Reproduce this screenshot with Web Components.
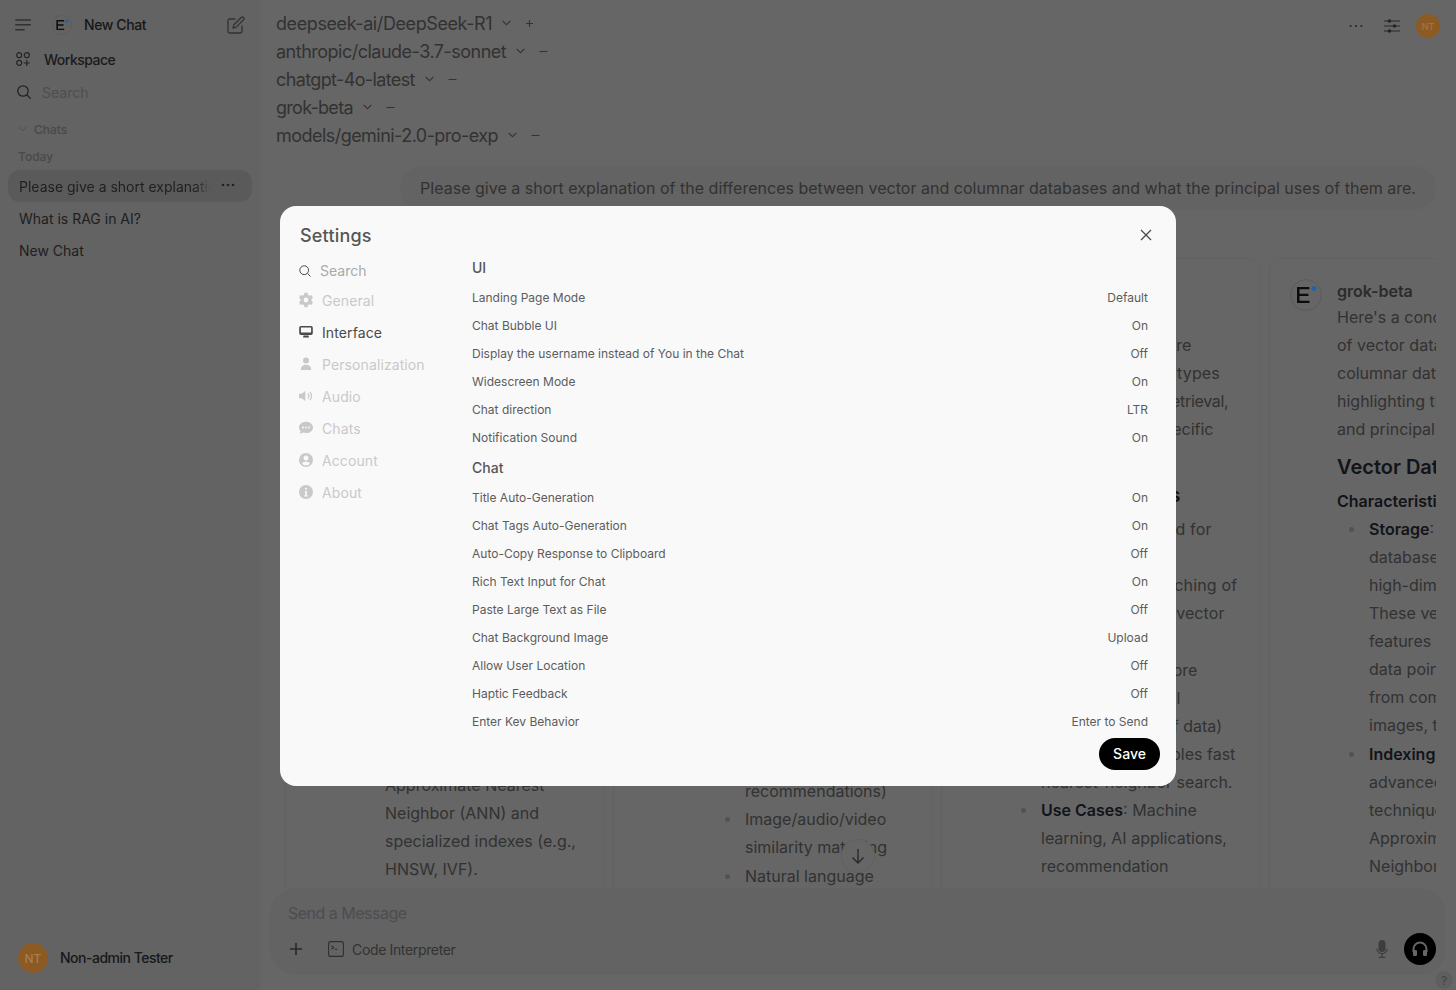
<!DOCTYPE html>
<html lang="en">
<head>
<meta charset="utf-8">
<title>Settings</title>
<style>
  html, body { margin: 0; height: 100%; overflow: hidden; background: #fff; }
  body { font-family: Inter, "Liberation Sans", sans-serif; }
</style>
</head>
<body>
<app-root></app-root>

<script>
const LOGO = (size) => `<svg class="logo" width="${size}" height="${size}" viewBox="0 0 32 32">
  <circle cx="16" cy="16" r="15.4" fill="none" stroke="#585858" stroke-width=".8"/>
  <path d="M7 8h12.300v2.200H9.500v4.600h9v2.200h-9v4.800h10V24H7z" fill="#0c0c0c"/>
  <circle cx="24" cy="9.500" r="2.400" fill="#1f64a6"/>
</svg>`;

class BaseElement extends HTMLElement {
  constructor(){
    super();
    this.attachShadow({ mode: 'open' });
    this.shadowRoot.innerHTML = this.constructor.markup;
  }
}

class SideItem extends BaseElement {
  static markup = /*html*/ `
    <style>
      :host{
        display: flex;
        align-items: center;
        height: 32px;
        margin: 0 8px;
        padding: 0 11px;
        border-radius: 12px;
        font-size: 14px;
        color: #505050;
      }
      :host([active]){ background: #e2e2e2; }
      .title{ flex: 1; white-space: nowrap; overflow: hidden; }
      :host([active]) .title{
        -webkit-mask-image: linear-gradient(to right, #000 176px, transparent 192px);
        mask-image: linear-gradient(to right, #000 176px, transparent 192px);
      }
      .more{ display: none; width: 16px; height: 16px; margin-right: 5px; color: #555; }
      :host([active]) .more{ display: block; }
    </style>
    <span class="title"><slot></slot></span>
    <svg class="more" viewBox="0 0 16 16" fill="currentColor"><circle cx="3" cy="7" r="1.300"/><circle cx="8" cy="7" r="1.300"/><circle cx="13" cy="7" r="1.300"/></svg>
  `;
}

class SideBar extends BaseElement {
  static markup = /*html*/ `
    <style>
      :host{
        display: flex;
        flex-direction: column;
        flex: none;
        width: 260px;
        height: 100%;
        background: #f7f7f7;
        font-size: 14px;
      }
      .top{ display: flex; align-items: center; height: 34px; margin-top: 8px; padding-left: 15px; }
      .top .logo{ margin-left: 21px; position: relative; z-index: 60; }
      .top .name{ margin: -2px 0 0 12px; font-weight: 500; letter-spacing: -.4px; color: #3e3e3e; flex: 1; }
      .top .pen{ margin-right: 15px; color: #7c7c7c; }
      .nav{ display: flex; align-items: center; height: 32px; padding-left: 16px; }
      .workspace{ margin-top: 1px; font-weight: 500; letter-spacing: -.5px; color: #484848; }
      .workspace span{ margin-left: 14px; }
      .search{ margin-top: 1px; color: #c4c4c4; padding-left: 17px; }
      .search span{ margin-left: 11px; }
      .chats{ display: flex; align-items: center; height: 24px; margin-top: 9px; padding-left: 18px; font-size: 12px; font-weight: 500; color: #b6b6b6; }
      .chats span{ margin-left: 7px; }
      .today{ height: 18px; line-height: 18px; margin: 7px 0 4px; padding-left: 18px; font-size: 12px; font-weight: 500; color: #b6b6b6; }
      .user{ display: flex; align-items: center; margin-top: auto; margin-bottom: 17px; padding-left: 18px; font-weight: 500; letter-spacing: -.5px; color: #3a3f4b; }
      .avatar{
        display: flex; align-items: center; justify-content: center;
        width: 30px; height: 30px; border-radius: 50%;
        background: #8c5a22; color: #a67e4e; font-size: 12px; letter-spacing: 0;
        position: relative; z-index: 60;
      }
      .user .label{ margin: -2px 0 0 12px; }
    </style>
    <div class="top">
      <svg width="16" height="12" viewBox="0 0 16 12" fill="none" stroke="#7c7c7c" stroke-width="1.500" stroke-linecap="round"><path d="M.8 1h14.600M.8 5.800h14.600M.8 10.800h8.400"/></svg>
      ${LOGO(20)}
      <span class="name">New Chat</span>
      <svg class="pen" width="18" height="18" viewBox="0 0 18 18" fill="none" stroke="currentColor" stroke-width="1.300" stroke-linejoin="round" stroke-linecap="round"><path d="M8 3H2.400A1.400 1.400 0 0 0 1 4.400v11.200A1.400 1.400 0 0 0 2.400 17h11.200a1.400 1.400 0 0 0 1.400-1.400V10"/><path d="M14.200 1.500a1.600 1.600 0 0 1 2.300 2.300L9.200 11.100l-3.200.9.9-3.200z"/></svg>
    </div>
    <div class="nav workspace">
      <svg width="14" height="14" viewBox="0 0 14 14" fill="none" stroke="#5a5a5a" stroke-width="1.200"><circle cx="3.200" cy="3.200" r="2.500"/><circle cx="10.800" cy="3.200" r="2.500"/><circle cx="3.200" cy="10.800" r="2.500"/><path d="M10.800 8v6M7.800 11h6"/></svg>
      <span>Workspace</span>
    </div>
    <div class="nav search">
      <svg width="14" height="14" viewBox="0 0 14 14" fill="none" stroke="#555" stroke-width="1.300" stroke-linecap="round"><circle cx="6" cy="6" r="5.200"/><path d="M10 10l3.400 3.400"/></svg>
      <span>Search</span>
    </div>
    <div class="chats">
      <svg width="9" height="6" viewBox="0 0 9 6" fill="none" stroke="#c4c4c4" stroke-width="1"><path d="M.5 .8l4 4 4-4"/></svg>
      <span>Chats</span>
    </div>
    <div class="today">Today</div>
    <side-item active>Please give a short explanation of the differences</side-item>
    <side-item>What is RAG in AI?</side-item>
    <side-item>New Chat</side-item>
    <div class="user">
      <div class="avatar">NT</div>
      <span class="label">Non-admin Tester</span>
    </div>
  `;
}

class ModelRow extends BaseElement {
  static markup = /*html*/ `
    <style>
      :host{ display: flex; align-items: center; height: 28px; font-size: 18px; letter-spacing: -.5px; color: #7e7e7e; white-space: nowrap; }
      svg{ flex: none; margin-left: 10px; color: #808080; }
      .sign{ margin-left: 14px; }
    </style>
    <slot></slot>
    <svg width="9" height="6" viewBox="0 0 9 6" fill="none" stroke="currentColor" stroke-width="1.200"><path d="M.6 .8l3.900 3.900L8.400 .8"/></svg>
    <svg class="sign" width="9" height="9" viewBox="0 0 9 9" fill="none" stroke="currentColor" stroke-width="1.100"></svg>
  `;
  connectedCallback(){
    const path = this.hasAttribute('add') ? 'M4.500 1v7M1 4.500h7' : 'M.5 4.500h8';
    this.shadowRoot.querySelector('.sign').innerHTML = `<path d="${path}"/>`;
  }
}

class ChatHeader extends BaseElement {
  static markup = /*html*/ `
    <style>
      :host{ display: flex; justify-content: space-between; align-items: flex-start; flex: none; padding: 9px 16px 0; }
      .actions{ display: flex; align-items: center; height: 24px; margin-top: 5px; }
      .avatar{
        display: flex; align-items: center; justify-content: center;
        width: 24px; height: 24px; margin-left: 16px; border-radius: 50%;
        background: #8c5a22; color: #a07546; font-size: 9px; font-weight: 500;
        position: relative; z-index: 60;
      }
      .sliders{ margin-left: 21px; }
    </style>
    <div>
      <model-row add style="letter-spacing:-.41px">deepseek-ai/DeepSeek-R1</model-row>
      <model-row>anthropic/claude-3.7-sonnet</model-row>
      <model-row style="letter-spacing:-.62px">chatgpt-4o-latest</model-row>
      <model-row style="letter-spacing:-.72px">grok-beta</model-row>
      <model-row style="letter-spacing:-.54px">models/gemini-2.0-pro-exp</model-row>
    </div>
    <div class="actions">
      <svg width="14" height="4" viewBox="0 0 14 4" fill="#5e5e5e"><circle cx="1.600" cy="2" r="1.100"/><circle cx="7" cy="2" r="1.100"/><circle cx="12.400" cy="2" r="1.100"/></svg>
      <svg class="sliders" width="16" height="14" viewBox="0 0 16 14" fill="#5e5e5e" stroke="#5e5e5e" stroke-width="1.200"><path d="M0 2h16M0 7h16M0 12h16" fill="none"/><circle cx="5.500" cy="2" r="1.200"/><circle cx="10.500" cy="7" r="1.200"/><circle cx="5.500" cy="12" r="1.200"/></svg>
      <div class="avatar">NT</div>
    </div>
  `;
}

class ChatLine extends BaseElement {
  static markup = /*html*/ `<style>
      :host{ display: block; height: 28px; line-height: 28px; font-size: 16px; color: #7d7d7d; white-space: nowrap; }
      :host([indent]){ padding-left: 32px; }
      :host([deep]){ padding-left: 64px; }
      :host([bullet])::before{
        content: '';
        display: inline-block;
        width: 5px;
        height: 5px;
        margin: 0 15px 2px -20px;
        border-radius: 50%;
        background: #ccc;
        vertical-align: middle;
      }
      :host([h2]){ font-size: 20px; font-weight: 600; color: #30343f; }
      :host([h3]){ height: 24px; line-height: 24px; font-size: 16px; font-weight: 600; color: #30343f; }
      :host([name]){ height: 24px; line-height: 24px; font-weight: 600; color: #6e6e6e; }
      ::slotted(b){ font-weight: 600; color: #30343f; }
    </style><slot></slot>`;
}

class ChatColumn extends BaseElement {
  static markup = /*html*/ `
    <style>
      :host{
        display: flex;
        flex: none;
        box-sizing: border-box;
        width: 320px;
        min-height: 700px;
        padding: 20px 20px 0;
        border: 1px dotted #e6e6e6;
        border-radius: 12px;
      }
      .badge{ flex: none; width: 32px; height: 32px; margin-right: 15px; }
      .badge svg{ display: block; position: relative; z-index: 60; }
      .body{ flex: 1; min-width: 0; }
    </style>
    <div class="badge"></div>
    <div class="body"><slot></slot></div>
  `;
  connectedCallback(){
    if(this.hasAttribute('logo')) this.shadowRoot.querySelector('.badge').innerHTML = LOGO(32);
  }
}

class MessageInput extends BaseElement {
  static markup = /*html*/ `
    <style>
      :host{
        display: block;
        flex: none;
        height: 87px;
        box-sizing: border-box;
        margin: 0 10px 15px;
        padding: 13px 10px 0 19px;
        border-radius: 26px;
        background: #f7f7f7;
      }
      .placeholder{ height: 24px; line-height: 24px; margin-left: -1px; font-size: 16px; letter-spacing: -.5px; color: #bcc1cb; }
      .tools{ display: flex; align-items: center; margin-top: 8px; height: 32px; }
      .code{ margin-left: 25px; display: flex; align-items: center; font-size: 14px; letter-spacing: -.35px; color: #808080; }
      .code span{ margin-left: 8px; }
      .plus{ color: #666; }
      .mic{ margin-left: auto; color: #9a9a9a; }
      .voice{
        display: flex; align-items: center; justify-content: center;
        width: 32px; height: 32px; margin-left: 16px;
        border-radius: 50%; background: #000; color: #fff;
      }
    </style>
    <div class="placeholder">Send a Message</div>
    <div class="tools">
      <svg class="plus" width="14" height="14" viewBox="0 0 14 14" fill="none" stroke="currentColor" stroke-width="1.600"><path d="M7 1v12M1 7h12"/></svg>
      <div class="code">
        <svg width="16" height="16" viewBox="0 0 16 16" fill="none" stroke="#747474" stroke-width="1.100"><rect x=".6" y=".6" width="14.800" height="14.800" rx="2"/><path d="M3.400 4.800l2.200 1.700-2.200 1.700M6.800 8.200h2.600"/></svg>
        <span>Code Interpreter</span>
      </div>
      <svg class="mic" width="12" height="18" viewBox="0 0 12 18" fill="currentColor"><rect x="2.500" y="0" width="7" height="12" rx="3.500"/><path d="M.8 8.500a5.200 5.200 0 0 0 10.400 0" fill="none" stroke="currentColor" stroke-width="1.200"/><path d="M6 13.700V17M2.800 17.300h6.400" fill="none" stroke="currentColor" stroke-width="1.200"/></svg>
      <div class="voice">
        <svg width="18" height="18" viewBox="0 0 18 18" fill="none"><path d="M2.500 12V9a6.500 6.500 0 0 1 13 0v3" stroke="#fff" stroke-width="2"/><rect x="2" y="10" width="4" height="6" rx="1.200" fill="#fff"/><rect x="12" y="10" width="4" height="6" rx="1.200" fill="#fff"/></svg>
      </div>
    </div>
  `;
}

class ChatMain extends BaseElement {
  static markup = /*html*/ `
    <style>
      :host{
        display: flex;
        flex-direction: column;
        flex: 1;
        min-width: 0;
        height: 100%;
        position: relative;
      }
      .bubble{
        align-self: flex-end;
        flex: none;
        box-sizing: border-box;
        height: 44px;
        margin: 17px 20px 0 0;
        padding: 0 20px;
        line-height: 44px;
        border-radius: 24px;
        background: #f7f7f7;
        font-size: 16px;
        letter-spacing: .013px;
        color: #7d7d7d;
        white-space: nowrap;
      }
      .columns{
        display: flex;
        gap: 8px;
        flex: 1;
        min-height: 0;
        margin: 48px 20px 0 25px;
        overflow: hidden;
      }
      .spacer{ display: block; }
      .down{
        display: flex; align-items: center; justify-content: center;
        box-sizing: border-box;
        position: absolute;
        left: 581px;
        bottom: 117px;
        width: 34px;
        height: 34px;
        border: 1px solid #eee;
        border-radius: 50%;
        background: #fff;
        color: #666;
      }
      .help{
        display: flex; align-items: center; justify-content: center;
        position: absolute;
        right: 3px;
        bottom: 1px;
        width: 18px;
        height: 18px;
        border-radius: 50%;
        background: #eee;
        font-size: 12px;
        color: #a8a8a8;
      }
    </style>
    <chat-header></chat-header>
    <div class="bubble">Please give a short explanation of the differences between vector and columnar databases and what the principal uses of them are.</div>
    <div class="columns">
      <chat-column>
        <div class="spacer" style="height:492px"></div>
        <chat-line indent>Approximate Nearest</chat-line>
        <chat-line indent>Neighbor (ANN) and</chat-line>
        <chat-line indent>specialized indexes (e.g.,</chat-line>
        <chat-line indent>HNSW, IVF).</chat-line>
      </chat-column>
      <chat-column>
        <div class="spacer" style="height:498px"></div>
        <chat-line deep>recommendations)</chat-line>
        <chat-line deep bullet>Image/audio/video</chat-line>
        <chat-line deep>similarity matching</chat-line>
        <chat-line deep bullet style="margin-top:1px">Natural language</chat-line>
      </chat-column>
      <chat-column>
        <div class="spacer" style="height:52px"></div>
        <chat-line>All vector databases are</chat-line>
        <chat-line style="letter-spacing:.18px">built for unstructured types</chat-line>
        <chat-line style="letter-spacing:-.32px">of data and semantic retrieval,</chat-line>
        <chat-line>columnar ones are specific</chat-line>
        <div class="spacer" style="height:38px"></div>
        <chat-line h2>Vector Databases</chat-line>
        <div class="spacer" style="height:6px"></div>
        <chat-line indent style="letter-spacing:.2px">Primarily designed for</chat-line>
        <div class="spacer" style="height:28px"></div>
        <chat-line indent style="letter-spacing:.17px">Fast concept matching of</chat-line>
        <chat-line indent style="letter-spacing:.1px">embeddings as a vector</chat-line>
        <div class="spacer" style="height:29px"></div>
        <chat-line indent>Specific vector store</chat-line>
        <chat-line indent>for text, and visual</chat-line>
        <chat-line indent>other large sets of data)</chat-line>
        <chat-line indent>Indexing that enables fast</chat-line>
        <chat-line indent>nearest-neighbor search.</chat-line>
        <chat-line indent bullet><b>Use Cases</b>: Machine</chat-line>
        <chat-line indent>learning, AI applications,</chat-line>
        <chat-line indent>recommendation</chat-line>
      </chat-column>
      <chat-column logo>
        <chat-line name>grok-beta</chat-line>
        <chat-line>Here's a concise comparison</chat-line>
        <chat-line>of vector databases and</chat-line>
        <chat-line>columnar databases,</chat-line>
        <chat-line>highlighting their differences</chat-line>
        <chat-line>and principal uses:</chat-line>
        <chat-line h2 style="margin-top:10px">Vector Databases</chat-line>
        <chat-line h3 style="margin-top:8px">Characteristics:</chat-line>
        <chat-line indent bullet style="margin-top:2px"><b>Storage</b>: Vector</chat-line>
        <chat-line indent>databases store</chat-line>
        <chat-line indent>high-dimensional vectors.</chat-line>
        <chat-line indent>These vectors represent</chat-line>
        <chat-line indent>features</chat-line>
        <chat-line indent>data points derived</chat-line>
        <chat-line indent>from complex sources like</chat-line>
        <chat-line indent>images, text</chat-line>
        <chat-line indent bullet style="margin-top:1px"><b>Indexing</b>: Using</chat-line>
        <chat-line indent>advanced indexing</chat-line>
        <chat-line indent>techniques like</chat-line>
        <chat-line indent>Approximate Nearest</chat-line>
        <chat-line indent>Neighbor</chat-line>
      </chat-column>
    </div>
    <message-input></message-input>
    <div class="down"><svg width="14" height="16" viewBox="0 0 14 16" fill="none" stroke="currentColor" stroke-width="1.400"><path d="M7 1v14M1.500 9.500L7 15l5.500-5.500"/></svg></div>
    <div class="help">?</div>
  `;
}

class SettingsRow extends BaseElement {
  static markup = /*html*/ `
    <style>
      :host{ display: flex; justify-content: space-between; align-items: center; height: 28px; font-size: 12px; color: #5c5c5c; white-space: nowrap; }
    </style>
    <span><slot></slot></span>
    <span class="value"></span>
  `;
  connectedCallback(){
    this.shadowRoot.querySelector('.value').textContent = this.getAttribute('value');
  }
}

class SettingsTab extends BaseElement {
  static markup = /*html*/ `
    <style>
      :host{ display: flex; align-items: center; height: 32px; padding-left: 2px; font-size: 14px; letter-spacing: .1px; color: #c9c9c9; }
      :host([active]){ color: #4a4a4a; }
      .icon{ display: flex; width: 16px; height: 16px; margin-right: 8px; }
    </style>
    <span class="icon"><slot name="icon"></slot></span>
    <slot></slot>
  `;
}

class SettingsModal extends BaseElement {
  static markup = /*html*/ `
    <style>
      :host{
        display: flex;
        align-items: center;
        justify-content: center;
        position: fixed;
        inset: 0;
        padding-top: 2px;
        box-sizing: border-box;
        z-index: 50;
        background: rgba(0, 0, 0, .6);
      }
      .card{
        display: flex;
        flex-direction: column;
        width: 896px;
        height: 580px;
        border-radius: 16px;
        background: #f9f9f9;
        color: #565656;
      }
      .head{
        display: flex;
        justify-content: space-between;
        align-items: center;
        flex: none;
        box-sizing: border-box;
        height: 52px;
        padding: 6px 24px 0 20px;
      }
      .head .title{ font-size: 18px; font-weight: 500; letter-spacing: .2px; }
      .body{ display: flex; flex: 1; min-height: 0; padding: 0 16px 16px; }
      .tabs{ flex: none; width: 160px; margin-right: 16px; }
      .find{ display: flex; align-items: center; height: 25px; margin-bottom: 1px; padding-left: 3px; font-size: 14px; color: #aaa; }
      .find svg{ margin-right: 9px; color: #4a4a4a; }
      .panel{ display: flex; flex-direction: column; flex: 1; min-width: 0; }
      .scroll{ height: 468px; padding-right: 12px; overflow: hidden; }
      .group{ height: 20px; line-height: 20px; margin-bottom: 5px; font-size: 14px; font-weight: 500; }
      .second{ margin-top: 7px; }
      .foot{ display: flex; justify-content: flex-end; margin-top: 12px; }
      .save{
        display: flex; align-items: center; justify-content: center;
        box-sizing: border-box;
        width: 61px; height: 32px;
        padding-bottom: 2px;
        border-radius: 16px;
        background: #000;
        color: #fff;
        font-size: 14px;
        font-weight: 500;
      }
      svg{ flex: none; }
    </style>
    <div class="card">
      <div class="head">
        <span class="title">Settings</span>
        <svg width="12" height="12" viewBox="0 0 12 12" fill="none" stroke="#4a4a4a" stroke-width="1.300"><path d="M1 1l10 10M11 1L1 11"/></svg>
      </div>
      <div class="body">
        <div class="tabs">
          <div class="find">
            <svg width="12" height="12" viewBox="0 0 12 12" fill="none" stroke="currentColor" stroke-width="1"><circle cx="5.200" cy="5.200" r="4.400"/><path d="M8.500 8.500l3 3"/></svg>
            Search
          </div>
          <settings-tab>
            <svg slot="icon" width="16" height="16" viewBox="0 0 20 20" fill="currentColor"><path fill-rule="evenodd" d="M7.84 1.804A1 1 0 0 1 8.82 1h2.36a1 1 0 0 1 .98.804l.331 1.652a6.993 6.993 0 0 1 1.929 1.115l1.598-.54a1 1 0 0 1 1.186.447l1.18 2.044a1 1 0 0 1-.205 1.251l-1.267 1.113a7.047 7.047 0 0 1 0 2.228l1.267 1.113a1 1 0 0 1 .206 1.25l-1.18 2.045a1 1 0 0 1-1.187.447l-1.598-.54a6.993 6.993 0 0 1-1.929 1.115l-.33 1.652a1 1 0 0 1-.98.804H8.82a1 1 0 0 1-.98-.804l-.331-1.652a6.993 6.993 0 0 1-1.929-1.115l-1.598.54a1 1 0 0 1-1.186-.447l-1.18-2.044a1 1 0 0 1 .205-1.251l1.267-1.114a7.05 7.05 0 0 1 0-2.227L1.821 7.773a1 1 0 0 1-.206-1.25l1.18-2.045a1 1 0 0 1 1.187-.447l1.598.54A6.992 6.992 0 0 1 7.51 3.456l.33-1.652ZM10 13a3 3 0 1 0 0-6 3 3 0 0 0 0 6Z"/></svg>
            General
          </settings-tab>
          <settings-tab active>
            <svg slot="icon" width="16" height="16" viewBox="0 0 16 16" fill="currentColor"><path fill-rule="evenodd" d="M3 2h10a1.800 1.800 0 0 1 1.800 1.800v5.400A1.800 1.800 0 0 1 13 11H3a1.800 1.800 0 0 1-1.800-1.800V3.800A1.800 1.800 0 0 1 3 2Zm-.1 1.600v4.300a.5.5 0 0 0 .5.5h9.200a.5.5 0 0 0 .5-.5V3.600a.4.4 0 0 0-.4-.2H3.300a.4.4 0 0 0-.4.2Z"/><path d="M5.500 11.500h5l.5 2H5z"/></svg>
            Interface
          </settings-tab>
          <settings-tab>
            <svg slot="icon" width="16" height="16" viewBox="0 0 16 16" fill="currentColor"><circle cx="8" cy="4.600" r="3"/><path d="M8 8.800c-3 0-5 1.900-5.200 4.300a.9.9 0 0 0 .9 1h8.600a.9.9 0 0 0 .9-1C13 10.700 11 8.800 8 8.800Z"/></svg>
            Personalization
          </settings-tab>
          <settings-tab>
            <svg slot="icon" width="16" height="16" viewBox="0 0 16 16" fill="currentColor"><path d="M1 5.800v4.400h2.500L7.300 13V3L3.500 5.800z"/><path d="M9.800 5.500a3.500 3.500 0 0 1 0 5M11.800 3.800a6 6 0 0 1 0 8.400" fill="none" stroke="currentColor" stroke-width="1.200"/></svg>
            Audio
          </settings-tab>
          <settings-tab>
            <svg slot="icon" width="16" height="16" viewBox="0 0 16 16" fill="currentColor"><path fill-rule="evenodd" d="M8 1.800C4.100 1.800 1 4.300 1 7.400c0 1.400.6 2.700 1.700 3.700-.1 1-.5 1.800-1.100 2.500 1.400 0 2.600-.5 3.500-1.100.9.3 1.900.5 2.900.5 3.900 0 7-2.500 7-5.600S11.900 1.800 8 1.800ZM5 8.500a1 1 0 1 0 0-2 1 1 0 0 0 0 2Zm3 0a1 1 0 1 0 0-2 1 1 0 0 0 0 2Zm3 0a1 1 0 1 0 0-2 1 1 0 0 0 0 2Z"/></svg>
            Chats
          </settings-tab>
          <settings-tab>
            <svg slot="icon" width="16" height="16" viewBox="0 0 16 16" fill="currentColor"><path fill-rule="evenodd" d="M15 8A7 7 0 1 1 1 8a7 7 0 0 1 14 0ZM10.500 6a2.500 2.500 0 1 1-5 0 2.500 2.500 0 0 1 5 0ZM8 9.500c-1.800 0-3.300.9-4 2.200A5.400 5.400 0 0 0 8 13.500a5.400 5.400 0 0 0 4-1.800c-.7-1.300-2.200-2.200-4-2.200Z"/></svg>
            Account
          </settings-tab>
          <settings-tab>
            <svg slot="icon" width="16" height="16" viewBox="0 0 16 16" fill="currentColor"><path fill-rule="evenodd" d="M15 8A7 7 0 1 1 1 8a7 7 0 0 1 14 0ZM9 4.800a1 1 0 1 1-2 0 1 1 0 0 1 2 0ZM6.800 7h2.100v4.500H10V12.500H6V11.500h1.200V8H6.800Z"/></svg>
            About
          </settings-tab>
        </div>
        <div class="panel">
          <div class="scroll">
            <div class="group">UI</div>
            <settings-row value="Default">Landing Page Mode</settings-row>
            <settings-row value="On">Chat Bubble UI</settings-row>
            <settings-row value="Off">Display the username instead of You in the Chat</settings-row>
            <settings-row value="On">Widescreen Mode</settings-row>
            <settings-row value="LTR">Chat direction</settings-row>
            <settings-row value="On">Notification Sound</settings-row>
            <div class="group second">Chat</div>
            <settings-row value="On">Title Auto-Generation</settings-row>
            <settings-row value="On">Chat Tags Auto-Generation</settings-row>
            <settings-row value="Off">Auto-Copy Response to Clipboard</settings-row>
            <settings-row value="On">Rich Text Input for Chat</settings-row>
            <settings-row value="Off">Paste Large Text as File</settings-row>
            <settings-row value="Upload">Chat Background Image</settings-row>
            <settings-row value="Off">Allow User Location</settings-row>
            <settings-row value="Off">Haptic Feedback</settings-row>
            <settings-row value="Enter to Send">Enter Key Behavior</settings-row>
          </div>
          <div class="foot"><div class="save">Save</div></div>
        </div>
      </div>
    </div>
  `;
}

class AppRoot extends BaseElement {
  static markup = /*html*/ `
    <style>
      :host{ display: flex; height: 100vh; overflow: hidden; background: #fff; }
    </style>
    <side-bar></side-bar>
    <chat-main></chat-main>
    <settings-modal></settings-modal>
  `;
}

customElements.define('side-item', SideItem);
customElements.define('side-bar', SideBar);
customElements.define('model-row', ModelRow);
customElements.define('chat-header', ChatHeader);
customElements.define('chat-line', ChatLine);
customElements.define('chat-column', ChatColumn);
customElements.define('message-input', MessageInput);
customElements.define('chat-main', ChatMain);
customElements.define('settings-row', SettingsRow);
customElements.define('settings-tab', SettingsTab);
customElements.define('settings-modal', SettingsModal);
customElements.define('app-root', AppRoot);
</script>
</body>
</html>
